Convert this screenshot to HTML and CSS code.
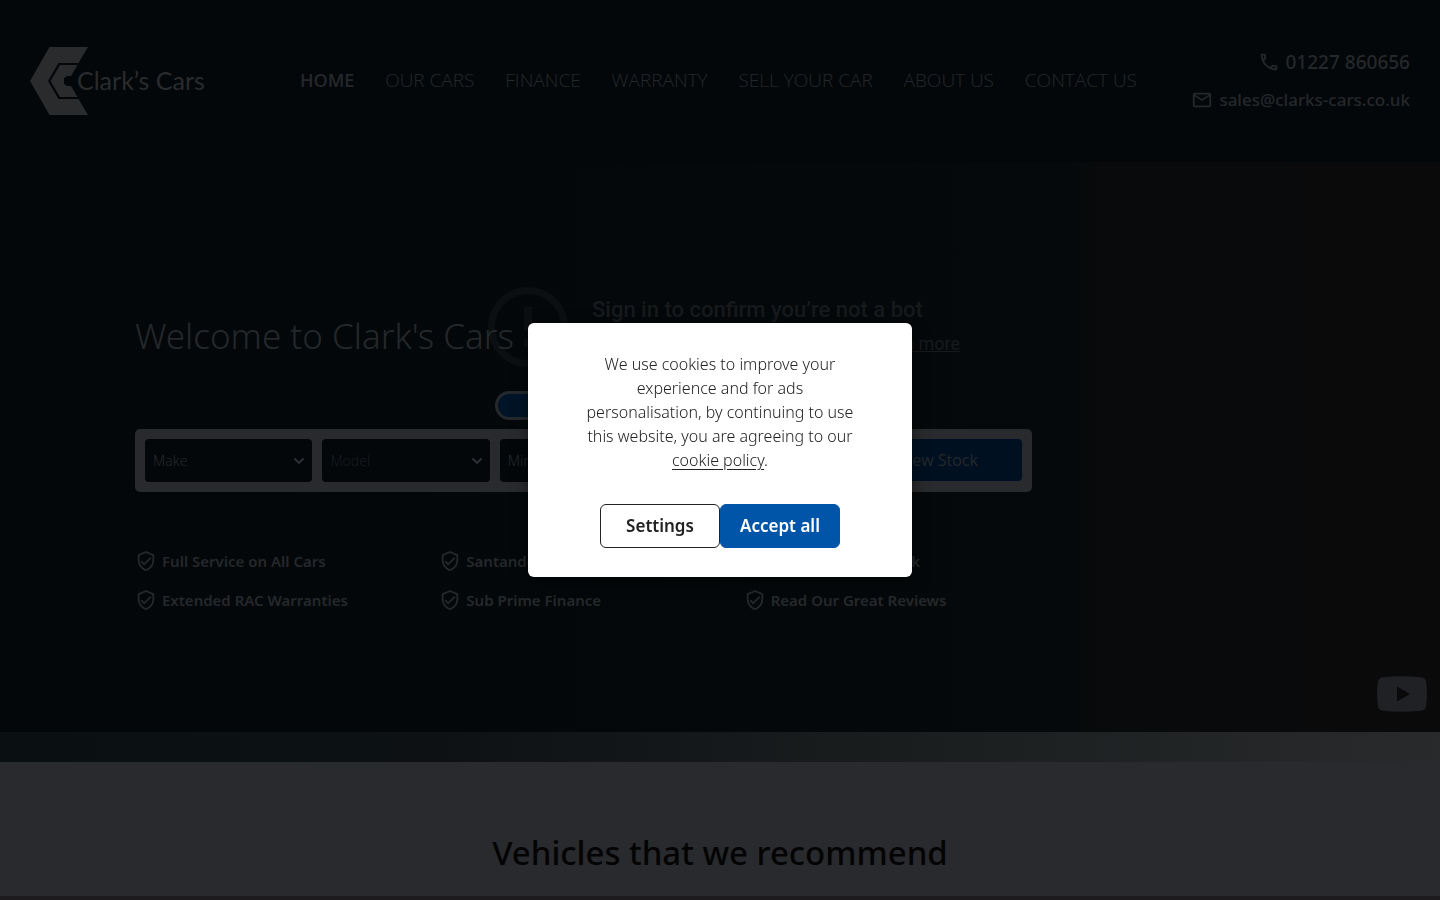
FILE: index.html
```html
<!DOCTYPE html>
<html lang="en">
<head>
<meta charset="utf-8">
<meta name="viewport" content="width=device-width, initial-scale=1">
<title>Clark's Cars</title>
<link rel="stylesheet" href="styles.css">
</head>
<body>
<svg class="sprite" aria-hidden="true">
  <symbol id="shield" viewBox="0 0 24 24"><path fill="currentColor" d="M12 1 3 5v6c0 5.55 3.84 10.74 9 12 5.16-1.260 9-6.450 9-12V5l-9-4zm7 10c0 4.520-2.980 8.690-7 9.930-4.020-1.240-7-5.410-7-9.930V6.300l7-3.110 7 3.110V11zm-11.590.590L6 13l4 4 8-8-1.410-1.420L10 14.170l-2.590-2.580z"/></symbol>
</svg>
<header class="header">
  <a class="logo" href="#" aria-label="Clark's Cars">
    <svg width="180" height="68" viewBox="0 0 180 68">
      <path class="logo-mark" d="M19.500 0H58L48.500 16H28.500L18 34l10.500 18H48.500L58 68H19.500L0 34z"/>
      <path class="logo-mark" d="M30 18H47.500L41 29h-4l-3 2v6l3 2h4L47.500 50H30L20.500 34z"/>
      <text class="logo-text" x="47" y="43">Clark’s Cars</text>
    </svg>
  </a>
  <nav class="nav">
    <a class="active" href="#">HOME</a><a href="#">OUR CARS</a><a href="#">FINANCE</a><a href="#">WARRANTY</a><a href="#">SELL YOUR CAR</a><a href="#">ABOUT US</a><a href="#">CONTACT US</a>
  </nav>
  <div class="contact">
    <a class="phone" href="tel:01227860656"><svg width="22" height="22" viewBox="0 0 24 24"><path fill="currentColor" d="M6.540 5c.06.890.210 1.760.450 2.590l-1.200 1.200c-.410-1.200-.670-2.470-.760-3.790h1.510m9.860 12.020c.850.240 1.720.390 2.600.450v1.490c-1.320-.090-2.590-.350-3.800-.750l1.200-1.190M7.500 3H4c-.550 0-1 .450-1 1 0 9.390 7.610 17 17 17 .550 0 1-.450 1-1v-3.490c0-.550-.450-1-1-1-1.240 0-2.450-.200-3.570-.570-.350-.110-.740-.030-1.020.240l-2.200 2.200c-2.830-1.450-5.150-3.760-6.590-6.590l2.200-2.200c.280-.280.360-.670.250-1.020C8.700 6.450 8.500 5.250 8.500 4c0-.550-.450-1-1-1z"/></svg>01227 860656</a>
    <a href="mailto:sales@clarks-cars.co.uk"><svg width="22" height="22" viewBox="0 0 24 24"><path fill="currentColor" d="M22 6c0-1.100-.9-2-2-2H4c-1.100 0-2 .9-2 2v12c0 1.100.9 2 2 2h16c1.100 0 2-.9 2-2V6zm-2 0-8 5-8-5h16zm0 12H4V8l8 5 8-5v10z"/></svg>sales@clarks-cars.co.uk</a>
  </div>
</header>
<main>
  <section class="hero">
    <div class="video">
      <svg class="alert" width="80" height="80" viewBox="0 0 80 80"><circle cx="40" cy="40" r="36.500" fill="none" stroke="currentColor" stroke-width="7"/><path fill="currentColor" d="M36 20h8v24h-8zM36 52h8v8h-8z"/></svg>
      <div class="video-text">
        <p class="video-title">Sign in to confirm you’re not a bot</p>
        <p class="video-sub">This helps protect our community. <a href="#">Learn more</a></p>
      </div>
    </div>
    <svg class="youtube" width="50" height="36" viewBox="0 0 50 36" aria-hidden="true"><path fill="currentColor" fill-rule="evenodd" d="M6 1.200Q25-.7 44 1.200q4.500.5 5.200 5 1.500 11.800 0 23.600-.7 4.500-5.200 5-19 1.900-38 0-4.500-.5-5.200-5-1.500-11.800 0-23.600.7-4.500 5.200-5zM20 10.500v15L33 18z"/></svg>
    <div class="hero-inner">
      <h1>Welcome to Clark's Cars</h1>
      <div class="pill"></div>
      <form class="search">
        <select aria-label="Make"><option>Make</option></select>
        <select aria-label="Model" disabled><option>Model</option></select>
        <select aria-label="Min price"><option>Min Price</option></select>
        <select aria-label="Max price"><option>Max Price</option></select>
        <button type="button">View Stock</button>
      </form>
      <ul class="features">
        <li><svg width="22" height="22"><use href="#shield"/></svg>Full Service on All Cars</li>
        <li><svg width="22" height="22"><use href="#shield"/></svg>Santander Finance</li>
        <li><svg width="22" height="22"><use href="#shield"/></svg>Open 7 Days A Week</li>
        <li><svg width="22" height="22"><use href="#shield"/></svg>Extended RAC Warranties</li>
        <li><svg width="22" height="22"><use href="#shield"/></svg>Sub Prime Finance</li>
        <li><svg width="22" height="22"><use href="#shield"/></svg>Read Our Great Reviews</li>
      </ul>
    </div>
  </section>
  <div class="band"></div>
  <section class="recommend"><h2>Vehicles that we recommend</h2></section>
  <div class="next"></div>
</main>
<div class="backdrop">
  <div class="dialog" role="dialog" aria-modal="true" aria-label="Cookies">
    <p>We use cookies to improve your<br>experience and for ads<br>personalisation, by continuing to use<br>this website, you are agreeing to our<br><a href="#">cookie policy</a>.</p>
    <div class="actions">
      <button class="settings" type="button">Settings</button>
      <button class="accept" type="button">Accept all</button>
    </div>
  </div>
</div>
</body>
</html>
```

FILE: styles.css
```css
:root {
  --ink: #25282b;
  --panel: #292a2d;
  --dark: #03070a;
}
* { box-sizing: border-box; }
html, body { height: 100%; }
body {
  margin: 0;
  overflow: hidden;
  background: var(--panel);
  color: var(--ink);
  font-family: "Noto Sans", "Open Sans", sans-serif;
  font-weight: 300;
  font-size: 16px;
}
a { color: inherit; text-decoration: none; }
h1, h2, p, ul { margin: 0; padding: 0; }
button, select { font: inherit; color: inherit; }
.sprite { position: absolute; width: 0; height: 0; }

.header {
  display: flex;
  align-items: center;
  justify-content: space-between;
  height: 162px;
  padding: 0 30px;
  background: #03070a;
}
.logo { display: flex; flex: 0 0 270px; }
.logo-mark { fill: #2a2b2d; }
.logo-text { fill: #2a2b2d; font-family: Lato, sans-serif; font-size: 25px; font-weight: 400; }
.nav {
  display: flex;
  flex: 0 1 837px;
  justify-content: space-between;
  font-family: "Open Sans", sans-serif;
  font-size: 19px;
  line-height: 24px;
  white-space: nowrap;
  padding-bottom: 2px;
}
.nav .active { font-size: 18px; font-weight: 600; }
.contact {
  display: flex;
  flex: 1;
  flex-direction: column;
  align-items: flex-end;
  gap: 14px;
  font-size: 17px;
  line-height: 24px;
  font-weight: 500;
  white-space: nowrap;
}
.contact a { display: flex; align-items: center; gap: 6px; }
.contact .phone { font-size: 19px; }

.hero {
  position: relative;
  height: 570px;
  padding: 150px 135px 0;
  background: linear-gradient(90deg, #03070a 0%, #04080a 50%, #06090b 74%, #090a0b 78%, #0a0a0b 100%);
}
.video {
  position: absolute;
  top: 125px;
  left: 488px;
  display: flex;
  gap: 24px;
  font-family: Roboto, sans-serif;
  font-weight: 400;
}
.alert { color: #0b0f12; }
.video-text { padding-top: 9px; color: #171a1d; }
.video-title { font-size: 22px; line-height: 28px; font-weight: 500; margin-bottom: 8px; }
.video-sub { font-size: 18px; line-height: 24px; }
.video-sub a { text-decoration: underline; }
.youtube { position: absolute; right: 13px; bottom: 20px; color: #202124; }
.hero-inner { position: relative; }
h1 { font-size: 35px; line-height: 48px; font-weight: 300; }
.pill {
  width: 177px;
  height: 29px;
  margin: 31px 0 9px 360px;
  border: 3px solid #25292d;
  border-radius: 15px;
  background: #001427;
}
.search {
  display: grid;
  grid-template-columns: repeat(5, 1fr);
  align-items: start;
  gap: 10px;
  max-width: 897px;
  padding: 10px;
  border-radius: 5px;
  background: var(--panel);
}
.search select {
  min-width: 0;
  height: 43px;
  padding: 0 30px 0 8px;
  border: 0;
  border-radius: 4px;
  appearance: none;
  background: var(--dark) url("data:image/svg+xml,%3Csvg xmlns='http://www.w3.org/2000/svg' width='12' height='8' viewBox='0 0 12 8'%3E%3Cpath d='M1.500 1.500 6 6l4.500-4.500' fill='none' stroke='%23303337' stroke-width='1.800'/%3E%3C/svg%3E") no-repeat right 7px center;
  font-size: 14px;
}
.search select:disabled { color: #181c1f; opacity: 1; }
.search button {
  height: 42px;
  border: 0;
  border-radius: 4px;
  background: #001020;
  font-family: "Open Sans", sans-serif;
  font-size: 16px;
  font-weight: 500;
}
.features {
  display: grid;
  grid-template-columns: repeat(3, 1fr);
  row-gap: 15px;
  max-width: 913px;
  margin-top: 57px;
  list-style: none;
  font-size: 15px;
  line-height: 24px;
  font-weight: 600;
  white-space: nowrap;
}
.features li { display: flex; align-items: center; gap: 5px; }
.band { height: 30px; background: linear-gradient(90deg, #0a1012 0%, #0d1113 30%, #1b1f20 67%, #292a2c 100%); }
.recommend { padding: 67px 20px 19px; text-align: center; color: #040405; }
h2 { font-size: 33px; line-height: 48px; font-weight: 500; }
.next { height: 4px; background: #1d1b1e; }

.backdrop {
  position: fixed;
  inset: 0;
  display: flex;
  align-items: center;
  justify-content: center;
}
.dialog {
  width: 384px;
  padding: 29px 48px;
  border-radius: 6px;
  background: #fff;
  box-shadow: 0 4px 16px rgb(0 0 0 / 50%);
  color: #222;
  text-align: center;
}
.dialog p { font-size: 16px; line-height: 24px; white-space: nowrap; }
.dialog p a { text-decoration: underline; text-underline-offset: 3px; }
.actions { display: flex; justify-content: center; margin-top: 32px; }
.actions button {
  width: 120px;
  height: 44px;
  padding: 0 0 2px;
  border: 1px solid #222;
  border-radius: 6px;
  background: #fff;
  font-size: 17px;
  font-weight: 600;
}
.actions .accept { border-color: #0055a9; background: #0055a9; color: #fff; }
```
